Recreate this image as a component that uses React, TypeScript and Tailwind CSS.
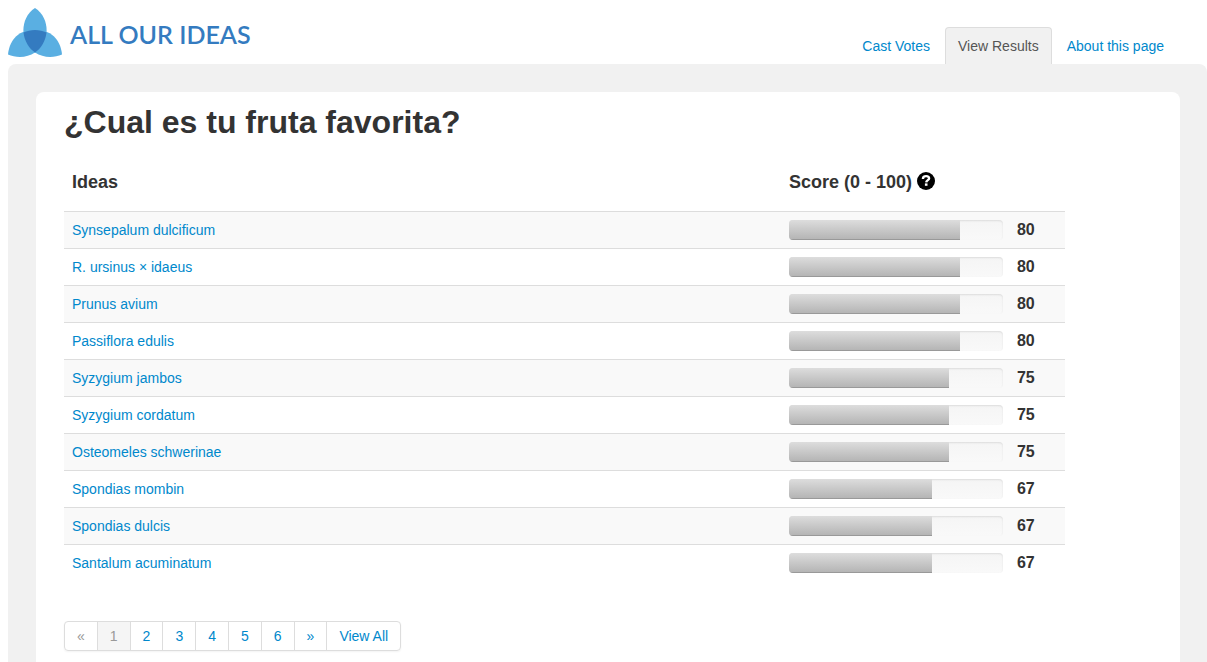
import React from "react";

const ideas: { name: string; score: number }[] = [
  { name: "Synsepalum dulcificum", score: 80 },
  { name: "R. ursinus × idaeus", score: 80 },
  { name: "Prunus avium", score: 80 },
  { name: "Passiflora edulis", score: 80 },
  { name: "Syzygium jambos", score: 75 },
  { name: "Syzygium cordatum", score: 75 },
  { name: "Osteomeles schwerinae", score: 75 },
  { name: "Spondias mombin", score: 67 },
  { name: "Spondias dulcis", score: 67 },
  { name: "Santalum acuminatum", score: 67 },
];

const pages = ["«", "1", "2", "3", "4", "5", "6", "»", "View All"];

function Logo() {
  return (
    <a href="#home" className="flex items-center gap-2 text-[#347bc0]">
      <svg width="54" height="50" viewBox="0 0 54 50" aria-hidden="true">
        <g fill="#5aafe2">
          <path d="M27 0C19 5 15.400 14 15.400 22C15.400 32 20 40 27 44.500C34 40 38.600 32 38.600 22C38.600 14 35 5 27 0Z" />
          <path d="M0 46.500C1 35 8 22 26 22C31 22 35 23 38.200 24.500C37 33 33 40 27 44.500C19 50 8 50 0 46.500Z" />
          <path d="M54 46.500C53 35 46 22 28 22C23 22 19 23 15.800 24.500C17 33 21 40 27 44.500C35 50 46 50 54 46.500Z" />
        </g>
        <path fill="#347bc0" d="M15.500 24.500C22 21 32 21 38.500 24.500C37.500 33 33 40.500 27 44.500C21 40.500 16.500 33 15.500 24.500Z" />
      </svg>
      <span className="pt-0.5 font-['Lato',sans-serif] text-[25px] leading-8 font-semibold">ALL OUR IDEAS</span>
    </a>
  );
}

function Header() {
  return (
    <header className="flex items-end justify-between pr-[30px]">
      <div className="pt-2 pb-1.5">
        <Logo />
      </div>
      <nav className="flex gap-0.5">
        <a href="#vote" className="border border-b-0 border-transparent px-3 py-2 text-[#0088cc]">Cast Votes</a>
        <a href="#results" aria-current="page" className="rounded-t border border-b-0 border-[#dddddd] bg-[#f1f1f1] px-3 py-2 text-[#555555]">View Results</a>
        <a href="#about" className="border border-b-0 border-transparent px-3 py-2 text-[#0088cc]">About this page</a>
      </nav>
    </header>
  );
}

function ScoreBar({ score }: { score: number }) {
  return (
    <div className="flex items-center gap-3.5">
      <div className="h-5 w-[214px] overflow-hidden rounded bg-linear-to-b from-[#f5f5f5] to-[#f9f9f9] shadow-[inset_0_1px_2px_rgba(0,0,0,0.1)]">
        <div
          className="h-full bg-linear-to-b from-[#dddddd] to-[#b3b3b3] shadow-[inset_0_-1px_0_rgba(0,0,0,0.15)]"
          style={{ width: `${score}%` }}
        />
      </div>
      <span className="text-base leading-5 font-bold">{score}</span>
    </div>
  );
}

function IdeasTable() {
  return (
    <table className="w-[92%] table-fixed text-left">
      <thead>
        <tr>
          <th className="px-2 pt-1.5 pb-[19px] text-lg leading-5 font-bold">Ideas</th>
          <th className="w-[284px] px-2 pt-1.5 pb-[19px] text-lg leading-5 font-bold">
            <span className="flex items-start gap-[5px]">
              Score (0 - 100)
              <button type="button" aria-label="About the score">
                <svg className="block" width="18" height="18" viewBox="0 0 18 18" aria-hidden="true">
                  <circle cx="9" cy="9" r="9" fill="#000" />
                  <path d="M6 7V6.300C6.200 4.700 7.400 4.100 9.100 4.100C11 4.100 12.100 5 12.100 6.400C12.100 7.900 9.400 8.300 9.200 10.300" fill="none" stroke="#fff" strokeWidth="2.400" />
                  <path d="M7.900 11.400h2.600v2.400H7.900z" fill="#fff" />
                </svg>
              </button>
            </span>
          </th>
        </tr>
      </thead>
      <tbody>
        {ideas.map((idea) => (
          <tr key={idea.name} className="border-t border-[#dddddd] odd:bg-[#f9f9f9]">
            <td className="p-2">
              <a href="#idea" className="text-[#0088cc]">{idea.name}</a>
            </td>
            <td className="p-2">
              <ScoreBar score={idea.score} />
            </td>
          </tr>
        ))}
      </tbody>
    </table>
  );
}

function Pagination() {
  return (
    <nav aria-label="Pages" className="inline-flex rounded border border-[#dddddd] shadow-[0_1px_2px_rgba(0,0,0,0.05)]">
      {pages.map((page) => {
        const tone =
          page === "1" ? "bg-[#f5f5f5] text-[#999999]" : page === "«" ? "text-[#999999]" : "text-[#0088cc]";
        return (
          <a
            key={page}
            href="#page"
            className={`border-l border-[#dddddd] px-3 py-1 first:border-l-0 ${tone}`}
          >
            {page}
          </a>
        );
      })}
    </nav>
  );
}

export default function App() {
  return (
    <div className="flex min-h-screen flex-col bg-white pl-2 font-['Liberation_Sans',Arial,sans-serif] text-sm leading-5 text-[#333333]">
      <Header />
      <main className="flex flex-1 flex-col rounded-t-lg bg-[#f1f1f1] pt-7 pr-[27px] pl-7">
        <section className="flex-1 rounded-t-lg bg-white px-7 pt-2.5 pb-2">
          <h1 className="mb-6 text-[32px] leading-10 font-bold">¿Cual es tu fruta favorita?</h1>
          <IdeasTable />
          <div className="mt-10 flex">
            <Pagination />
          </div>
        </section>
      </main>
    </div>
  );
}
